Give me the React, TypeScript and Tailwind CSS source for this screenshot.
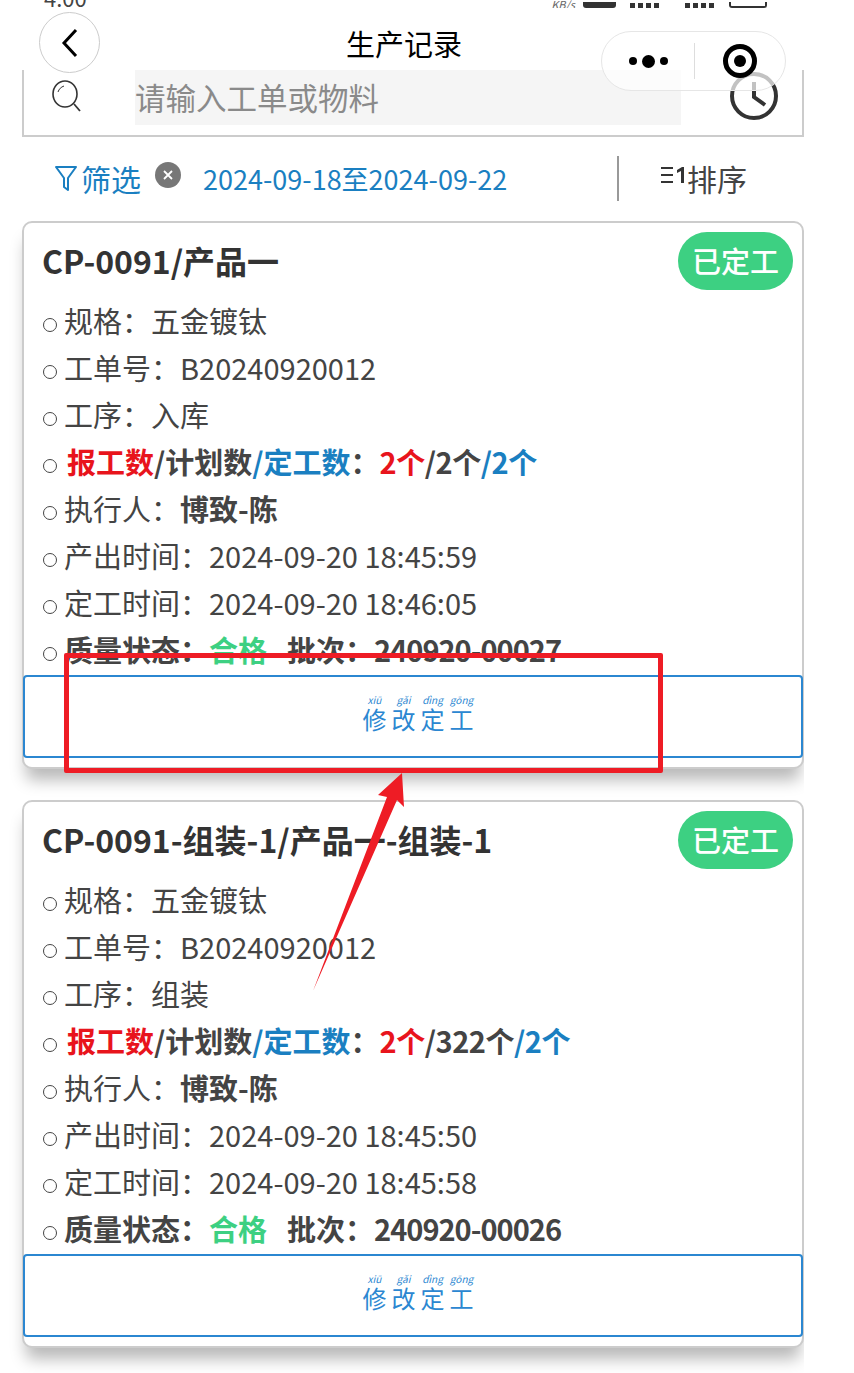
import React from 'react';

interface RecordItem {
  title: string;
  orderNo: string;
  step: string;
  plan: string;
  outTime: string;
  fixTime: string;
  batch: string;
}

const records: RecordItem[] = [
  {
    title: 'CP-0091/产品一',
    orderNo: 'B20240920012',
    step: '入库',
    plan: '2个',
    outTime: '2024-09-20 18:45:59',
    fixTime: '2024-09-20 18:46:05',
    batch: '240920-00027',
  },
  {
    title: 'CP-0091-组装-1/产品一-组装-1',
    orderNo: 'B20240920012',
    step: '组装',
    plan: '322个',
    outTime: '2024-09-20 18:45:50',
    fixTime: '2024-09-20 18:45:58',
    batch: '240920-00026',
  },
];

const pinyin = [
  ['xiū', '修'],
  ['gǎi', '改'],
  ['dìng', '定'],
  ['gōng', '工'],
];

const Row: React.FC<{ children: React.ReactNode }> = ({ children }) => (
  <div className="flex h-[47px] items-center pl-[19px] text-[29px] leading-none text-[#444]">
    <span className="mt-[4px] mr-[7px] h-[14px] w-[14px] shrink-0 rounded-full border border-[#444]" />
    <span className="-mt-[5px] whitespace-pre">{children}</span>
  </div>
);

const Card: React.FC<{ item: RecordItem }> = ({ item }) => (
  <div className="rounded-[10px] border-2 border-[#ccc] bg-white pb-[9px] shadow-[0_15px_16px_-4px_rgba(0,0,0,0.28)]">
    <div className="flex h-[76px] items-start justify-between pr-[9px] pl-[18px]">
      <h2 className="mt-[14px] text-[32px] leading-[46px] font-semibold whitespace-nowrap text-[#333]">{item.title}</h2>
      <span className="mt-[9px] flex h-[58px] w-[115px] items-center justify-center rounded-full bg-[#3dd082] text-[29px] font-medium text-white">
        已定工
      </span>
    </div>
    <Row>规格：五金镀钛</Row>
    <Row>工单号：{item.orderNo}</Row>
    <Row>工序：{item.step}</Row>
    <Row>
      <span className="ml-[3px] font-semibold">
        <span className="text-[#e8141c]">报工数</span>/计划数<span className="text-[#1a7fc1]">/定工数</span>：
        <span className="tracking-[-0.45px]">
          <span className="text-[#e8141c]">2个</span>/{item.plan}
          <span className="text-[#1a7fc1]">/2个</span>
        </span>
      </span>
    </Row>
    <Row>
      执行人：<span className="font-semibold">博致-陈</span>
    </Row>
    <Row>产出时间：{item.outTime}</Row>
    <Row>定工时间：{item.fixTime}</Row>
    <Row>
      <span className="font-semibold">
        质量状态：<span className="mr-[20px] text-[#3dd082]">合格</span>批次：
        <span className="tracking-[-1px]">{item.batch}</span>
      </span>
    </Row>
    <button className="-mx-[1px] flex h-[83px] w-[780px] items-center justify-center gap-[7px] rounded-[4px] border-2 border-[#2b87d1] bg-white pb-[7px] pl-[10px] text-[#2b87d1]">
      {pinyin.map(([py, han]) => (
        <span key={han} className="flex w-[22px] flex-col items-center">
          <span className="text-[10px] leading-[12px] italic">{py}</span>
          <span className="text-[24px] leading-[26px]">{han}</span>
        </span>
      ))}
    </button>
  </div>
);

export default function App() {
  return (
    <div
      className="relative h-[1373px] w-[854px] overflow-hidden bg-white"
      style={{ fontFamily: '"Noto Sans CJK SC", "Noto Sans", sans-serif' }}
    >
      {/* status bar, cut off by the top of the shot */}
      <div className="flex h-[8px] items-end justify-between overflow-hidden pr-[87px] pl-[44px]">
        <span className="text-[22px] leading-[22px] text-[#444]">4:00</span>
        <div className="flex items-end">
          <span className="text-[11px] leading-[8px] text-[#666] italic">KB/s</span>
          <span className="ml-[8px] h-[6px] w-[33px] rounded-b-[3px] bg-[#333]" />
          <span className="ml-[14px] h-[5px] w-[32px] bg-[repeating-linear-gradient(90deg,#333_0_5px,transparent_5px_8px)]" />
          <span className="ml-[23px] h-[5px] w-[32px] bg-[repeating-linear-gradient(90deg,#333_0_5px,transparent_5px_8px)]" />
          <span className="ml-[12px] h-[6px] w-[38px] rounded-b-[3px] border-2 border-t-0 border-[#333]" />
        </div>
      </div>

      {/* nav title */}
      <div className="flex h-[62px] w-[808px] items-center justify-center pt-[10px] text-[29px] text-black">生产记录</div>

      <div className="w-[804px] overflow-hidden pb-[40px] pl-[22px]">
        {/* search */}
        <div className="flex h-[67px] items-start border-x-2 border-b-2 border-[#ccc] bg-white">
          <svg className="mt-[9px] ml-[26px] h-[34px] w-[34px]" viewBox="0 0 34 34" fill="none" stroke="#333" strokeWidth="1.6">
            <ellipse cx="15" cy="15" rx="12" ry="13" />
            <path d="M24 25l6 7" strokeWidth="1.8" />
            <path d="M8 13c1-3 3-5 6-6" strokeWidth="1" />
          </svg>
          <div className="ml-[51px] flex h-[55px] w-[546px] items-center bg-[#f5f5f5] text-[30.5px] text-[#8a8a8a]">
            请输入工单或物料
          </div>
        </div>

        {/* filter */}
        <div className="flex h-[84px] items-center pb-[2px]">
          <div className="flex w-[595px] items-center pl-[32px]">
            <svg className="h-[27px] w-[24px]" viewBox="0 0 24 27" fill="none" stroke="#1a7fc1" strokeWidth="2" strokeLinejoin="round">
              <path d="M2 2h20l-8 11v12l-4-3v-9z" />
            </svg>
            <span className="ml-[3px] text-[30px] leading-none text-[#1a7fc1]">筛选</span>
            <span className="mb-[6px] ml-[14px] flex h-[26px] w-[26px] items-center justify-center rounded-full bg-[#777]">
              <svg className="h-[12px] w-[12px]" viewBox="0 0 12 12" stroke="#fff" strokeWidth="1.8">
                <path d="M2 2l8 8M10 2l-8 8" />
              </svg>
            </span>
            <span className="ml-[22px] text-[27px] leading-none whitespace-nowrap text-[#1a7fc1]">2024-09-18至2024-09-22</span>
          </div>
          <div className="h-[45px] w-[2px] bg-[#999]" />
          <div className="ml-[42px] flex items-center text-[#444]">
            <svg className="mb-[6px] h-[20px] w-[26px]" viewBox="0 0 26 20" fill="#333">
              <rect x="0" y="2" width="12" height="2" />
              <rect x="0" y="9" width="12" height="2" />
              <rect x="0" y="16" width="12" height="2" />
              <path d="M16 5l5-3h2v16h-3V6l-4 2z" />
            </svg>
            <span className="text-[30px] leading-none">排序</span>
          </div>
        </div>

        <div className="flex flex-col gap-[31px]">
          {records.map((item) => (
            <Card key={item.batch} item={item} />
          ))}
        </div>
      </div>

      {/* back button over the page */}
      <div className="absolute top-[12px] left-[39px] flex h-[61px] w-[61px] items-center justify-center rounded-full border border-[#ccc] bg-white">
        <svg className="h-[30px] w-[18px]" viewBox="0 0 18 30" fill="none" stroke="#000" strokeWidth="3">
          <path d="M15 2L3 15l12 13" />
        </svg>
      </div>

      {/* clock sits under the capsule */}
      <svg className="absolute top-[72px] left-[730px] h-[48px] w-[48px]" viewBox="0 0 48 48" fill="none" stroke="#333" strokeWidth="4">
        <circle cx="24" cy="24" r="22" />
        <path d="M24 10v15l11 8" />
      </svg>

      {/* capsule */}
      <div className="absolute top-[31px] left-[601px] flex h-[60px] w-[185px] items-center rounded-full border border-[#e6e6e6] bg-white/70">
        <div className="flex w-[92px] items-center justify-center gap-[5px]">
          <span className="h-[8px] w-[8px] rounded-full bg-black" />
          <span className="h-[13px] w-[13px] rounded-full bg-black" />
          <span className="h-[8px] w-[8px] rounded-full bg-black" />
        </div>
        <div className="h-[36px] w-px bg-[#ddd]" />
        <div className="flex flex-1 items-center justify-center">
          <span className="flex h-[34px] w-[34px] items-center justify-center rounded-full border-[5px] border-black">
            <span className="h-[12px] w-[12px] rounded-full bg-black" />
          </span>
        </div>
      </div>

      {/* red annotation */}
      <div className="absolute top-[653px] left-[64px] h-[120px] w-[599px] rounded-[2px] border-[5px] border-[#ee1c25]" />
      <svg className="absolute top-[765px] left-[305px] h-[235px] w-[110px]" viewBox="305 765 110 235" fill="#ee1c25">
        <polygon points="402,773 404,807 397,800 313,991 387,797 378,795" />
      </svg>
    </div>
  );
}
